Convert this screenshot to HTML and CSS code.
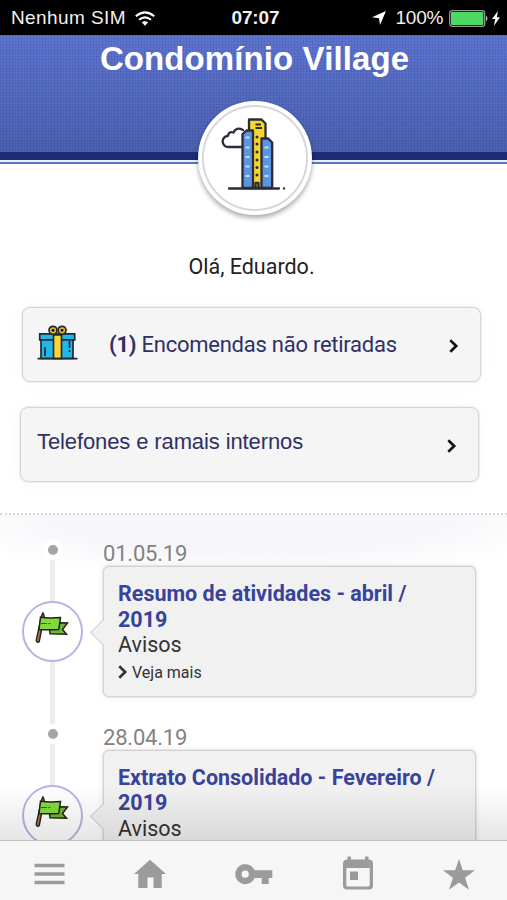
FILE: index.html
```html
<!DOCTYPE html>
<html lang="pt-BR">
<head>
<meta charset="utf-8">
<title>Condomínio Village</title>
<link rel="stylesheet" href="styles.css">
</head>
<body>
<svg class="defs" width="0" height="0" aria-hidden="true">
  <symbol id="flag" viewBox="0 0 36 34">
    <path d="M7.500 4 9 .8l1.200 3.400-5 25.500q-2.400 1.500-3-1.300Z" fill="#a97545" stroke="#222" stroke-width="1.400"/>
    <path d="M15.500 17.500 16 21.800l16.500.500-4-4.800 5-6.500-7.500-.3Z" fill="#6fb832" stroke="#222" stroke-width="1.500"/>
    <path d="M6.500 5.200q9 1.300 20 .3l-1.800 12q-9 .5-19.700 0Z" fill="#82d93c" stroke="#222" stroke-width="1.500"/>
    <path d="M7 11.500h6m1.500 0h2" fill="none" stroke="#35631e"/>
  </symbol>
  <symbol id="chevron" viewBox="0 0 10 14"><path d="m1.300 1.300 5.900 5.700-5.900 5.700" fill="none" stroke="currentColor" stroke-width="2.600"/></symbol>
</svg>
<div class="phone">
  <div class="status">
    <div class="carrier"><span class="carrier-name">Nenhum SIM</span>
      <svg class="wifi" width="20" height="15" viewBox="0 0 20 15"><g fill="none" stroke="#fff" stroke-width="2"><path d="M.8 5.300q9.200-7.800 18.400 0"/><path d="M4 8.800q6-4.800 12 0"/></g><path d="M6.800 11.300q3.200-2.300 6.400 0L10 14.800Z" fill="#fff"/></svg>
    </div>
    <span class="clock">07:07</span>
    <div class="power">
      <svg width="14" height="14" viewBox="0 0 14 14"><path d="M14 0 8 14 7 7.300 0 6.200Z" fill="#fff"/></svg>
      <span class="percent">100%</span>
      <svg class="battery" width="40" height="17" viewBox="0 0 40 17"><rect x=".7" y=".7" width="35" height="15.600" rx="2.500" fill="#000" stroke="#999" stroke-width="1.300"/><rect x="2" y="2" width="32.400" height="13" rx="1" fill="#4cd964"/><path d="M37 5.500q3 3 0 6Z" fill="#bbb"/></svg>
      <svg width="8" height="15" viewBox="0 0 8 15"><path d="M6 0 0 8h3.300L1.800 15 8 6.200H4.800Z" fill="#fff"/></svg>
    </div>
  </div>
  <header class="hero">
    <h1>Condomínio Village</h1>
    <div class="avatar"><div class="ring">
      <svg width="66" height="74" viewBox="0 0 66 74">
        <g stroke="#2b2c38" stroke-width="2.300" stroke-linejoin="round" stroke-linecap="round">
          <path d="M22 30H7.500a5.600 5.600 0 0 1-.5-11.200q.8-5 5.500-3.300 2.500-6 9.500-2.500" fill="#fff"/>
          <path d="M28 71V2.500h12.500l4 4V71Z" fill="#f6d52d"/>
          <path d="M21.500 71V17l4-3.500H32V71Z" fill="#5d93df"/>
          <path d="M40.500 71V21.500h6.700l4 4V71Z" fill="#5d93df"/>
          <path d="M34.500 71v-5h3v5M8 71.500h50M63 71.500h.1" fill="none"/>
        </g>
        <path d="M34.500 7.500H40M34.500 11H41" stroke="#2b2c38" stroke-width="1.800"/>
        <g fill="#2b2c38"><circle cx="36" cy="20" r="1.500"/><circle cx="36" cy="27" r="1.500"/><circle cx="36" cy="35" r="1.500"/><circle cx="36" cy="43" r="1.500"/><circle cx="36" cy="50.500" r="1.500"/><circle cx="36" cy="58" r="1.500"/></g>
        <path d="M24.500 20.500h4m-4 10h4m-4 9.500h4m-4 9.500h4m-4 9.500h4m15-28.500h4m-4 9.500h4m-4 9.500h4m-4 9.500h4" stroke="#b5e7f4" stroke-width="2"/>
      </svg>
    </div></div>
  </header>
  <main>
    <p class="hello">Olá, Eduardo.</p>
    <div class="links">
      <a class="card parcels">
        <svg class="gift" width="41" height="35" viewBox="0 0 41 35"><g stroke="#252733" stroke-width="1.700"><path d="M4 12h32v21.500H4Z" fill="#20b8e6"/><path d="M2.700 8.800h35v6h-35Z" fill="#20b8e6"/><path d="M16.500 10h8v23.500h-8Z" fill="#ffd52f"/><circle cx="16" cy="5.300" r="4" fill="#dfba2b"/><circle cx="25" cy="5.300" r="4" fill="#dfba2b"/><path d="M.5 33.700h40M8 22v9M32.500 16v7m0 2v2"/></g><circle cx="16" cy="5.300" r="1.400"/><circle cx="25" cy="5.300" r="1.400"/></svg>
        <span class="parcel-text"><b>(1)</b> Encomendas não retiradas</span>
        <svg class="chev"><use href="#chevron"/></svg>
      </a>
      <a class="card phones"><span class="phone-text">Telefones e ramais internos</span><svg class="chev"><use href="#chevron"/></svg></a>
    </div>
    <section class="timeline">
      <article class="entry">
        <div class="rail"><i class="dot"></i><div class="badge"><svg width="36" height="34"><use href="#flag"/></svg></div></div>
        <div class="body"><time>01.05.19</time>
          <div class="panel"><h2>Resumo de atividades - abril / 2019</h2><p>Avisos</p><a class="more"><svg width="10" height="14"><use href="#chevron"/></svg>Veja mais</a></div>
        </div>
      </article>
      <article class="entry">
        <div class="rail"><i class="dot"></i><div class="badge"><svg width="36" height="34"><use href="#flag"/></svg></div></div>
        <div class="body"><time>28.04.19</time>
          <div class="panel"><h2>Extrato Consolidado - Fevereiro / 2019</h2><p>Avisos</p></div>
        </div>
      </article>
    </section>
  </main>
  <nav class="tabs">
    <svg width="32" height="36" viewBox="0 0 32 36"><path d="M1.500 9.500h30M1.500 18h30M1.500 26.500h30" stroke="currentColor" stroke-width="3.400"/></svg>
    <svg width="32" height="36" viewBox="0 0 32 36"><path d="M16 3.800 32 18h-4.300v14h-8.200V21.500h-6V32H4.300V18H0Z"/></svg>
    <svg width="38" height="36" viewBox="0 0 38 36"><path fill-rule="evenodd" d="M19.500 14.300a10 10 0 1 0 0 7.700h7.200v6h7V22h3.600v-7.700ZM10.200 14.600a3.600 3.600 0 1 1 0 7.200 3.600 3.600 0 0 1 0-7.200Z"/></svg>
    <svg width="32" height="36" viewBox="0 0 32 36"><path fill-rule="evenodd" d="M5.500.500h3.500v3h14v-3h3.500v3q4.500 0 4.500 4v22q0 4-4 4H5q-4 0-4-4v-22q0-4 4.500-4ZM4.300 12v16.500q0 2 1.500 2h20.400q1.500 0 1.500-2V12ZM8 15.500h8v8.500H8Z"/></svg>
    <svg width="32" height="36" viewBox="0 0 32 36"><path d="m16 3 3.800 11.300H32l-9.900 7.500 3.900 12-10-7.300-10 7.300 3.900-12L0 14.300h12.200Z"/></svg>
  </nav>
</div>
</body>
</html>
```

FILE: styles.css
```css
* { box-sizing: border-box; }
body { margin: 0; background: #fff; font-family: Roboto, sans-serif; }
h1, h2, p { margin: 0; }
svg { display: block; flex: none; }
.defs { position: absolute; }
.phone { width: 507px; height: 900px; display: flex; flex-direction: column; overflow: hidden; }

.status { height: 35px; flex: none; display: grid; grid-template-columns: 1fr auto 1fr; align-items: center; padding: 1px 7px 0 11px; background: #000; color: #f1f1f1; font: 19px/24px "Liberation Sans", sans-serif; }
.carrier, .power { display: flex; align-items: center; }
.carrier { gap: 9px; }
.carrier-name { letter-spacing: .4px; }
.clock { font-weight: bold; letter-spacing: -.1px; }
.power { justify-content: flex-end; gap: 3px; }
.percent { letter-spacing: -.3px; margin: 0 3px 0 7px; }

.hero { height: 130px; flex: none; display: flex; flex-direction: column; align-items: center; color: #fff; padding-left: 2px;
  background:
    linear-gradient(#0000 117px, #1c2b75 117px 125px, #e8eefb 125px 127px, #5e75bf 127px 129px, #fff 129px),
    repeating-linear-gradient(90deg, #25368826 0 1px, #0000 1px 3px),
    repeating-linear-gradient(#25368820 0 1px, #0000 1px 3px),
    linear-gradient(#5f75d0, #4c62af 117px); }
h1 { height: 66px; flex: none; padding-top: 4px; font: bold 33px/40px "Liberation Sans", sans-serif; letter-spacing: .1px; white-space: nowrap; }
.avatar { width: 114px; height: 114px; flex: none; padding: 4px; border-radius: 50%; background: #fff; box-shadow: 0 3px 5px #0005; }
.ring { width: 106px; height: 106px; display: flex; align-items: center; justify-content: center; border: 2px solid #d7d6e2; border-radius: 50%; padding: 0 2px 8px 0; }

main { flex: 1; min-height: 0; overflow: hidden; }
.hello { padding-top: 89px; text-align: center; font-size: 21.500px; line-height: 26px; color: #222; padding-right: 4px; }
.links { padding: 27px 26px 0 22px; }
.card { height: 75px; display: flex; align-items: center; border: 1.500px solid #d6d6d9; border-radius: 8px; background: #f5f5f6; color: #303163; box-shadow: 0 0 0 1px #d6d6d955, 0 0 18px #00000008; font-size: 22px; white-space: nowrap; }
.parcels { padding: 0 21px 0 14px; }
.phones { margin: 25px 2px 0 -2px; padding: 0 21px 0 16px; font-family: "Liberation Sans", sans-serif; letter-spacing: -.11px; }
.gift { margin-top: -4px; }
.parcel-text { margin-left: 31px; letter-spacing: -.25px; }
.phone-text { margin-top: -5px; }
.chev { width: 10px; height: 14px; margin: 3px 0 0 auto; color: #111; }

.timeline { margin-top: 31px; border-top: 2px dotted #d9d9de; padding: 25px 31px 0 22px; background: radial-gradient(ellipse 330px 64px at 50% 0, #f5f5fa 0 50%, #fff0 100%); }
.entry { display: flex; gap: 21px; height: 183.500px; }
.rail { width: 60px; flex: none; display: flex; flex-direction: column; align-items: center; background: linear-gradient(90deg, #0000 28px, #ededee 28px 33px, #0000 33px); }
.dot { width: 20px; height: 20px; flex: none; border: 5px solid #fff; border-radius: 50%; background: #a5a5a5; margin-left: 2px; }
.badge { width: 61px; height: 61px; flex: none; display: flex; align-items: center; justify-content: center; margin-top: 41px; border: 2px solid #b8b3e3; border-radius: 50%; background: #fff; padding-bottom: 5px; }
.body { flex: 1; }
time { display: block; height: 26px; font-size: 22px; line-height: 27px; letter-spacing: -.2px; color: #828282; }
.panel { position: relative; height: 131px; padding: 14px; border: 1px solid #d2d2d4; border-radius: 6px; background: #f1f1f1; box-shadow: 0 0 0 1px #d2d2d455, 0 0 6px #00000018; color: #333; }
.panel::before { content: ""; position: absolute; left: -10px; top: 56px; width: 18px; height: 18px; border-left: 1px solid #d2d2d4; border-bottom: 1px solid #d2d2d4; background: #f1f1f1; transform: rotate(45deg); }
h2 { font-size: 21.500px; line-height: 25.700px; color: #38439b; font-weight: 700; }
.panel p { font-size: 21.500px; line-height: 26px; }
.more { display: flex; align-items: center; gap: 4px; height: 28px; font-size: 16px; }

.tabs { position: relative; height: 60px; flex: none; display: flex; align-items: center; justify-content: space-between; padding: 6px 32px 0 33px; border-top: 1px solid #d5d5d6; background: #f6f6f6; color: #9b9b9b; }
.tabs svg { fill: currentColor; }
.tabs::before { content: ""; position: absolute; left: 0; right: 0; bottom: 100%; height: 55px; background: linear-gradient(#fff0, #0000001a); pointer-events: none; }
```
